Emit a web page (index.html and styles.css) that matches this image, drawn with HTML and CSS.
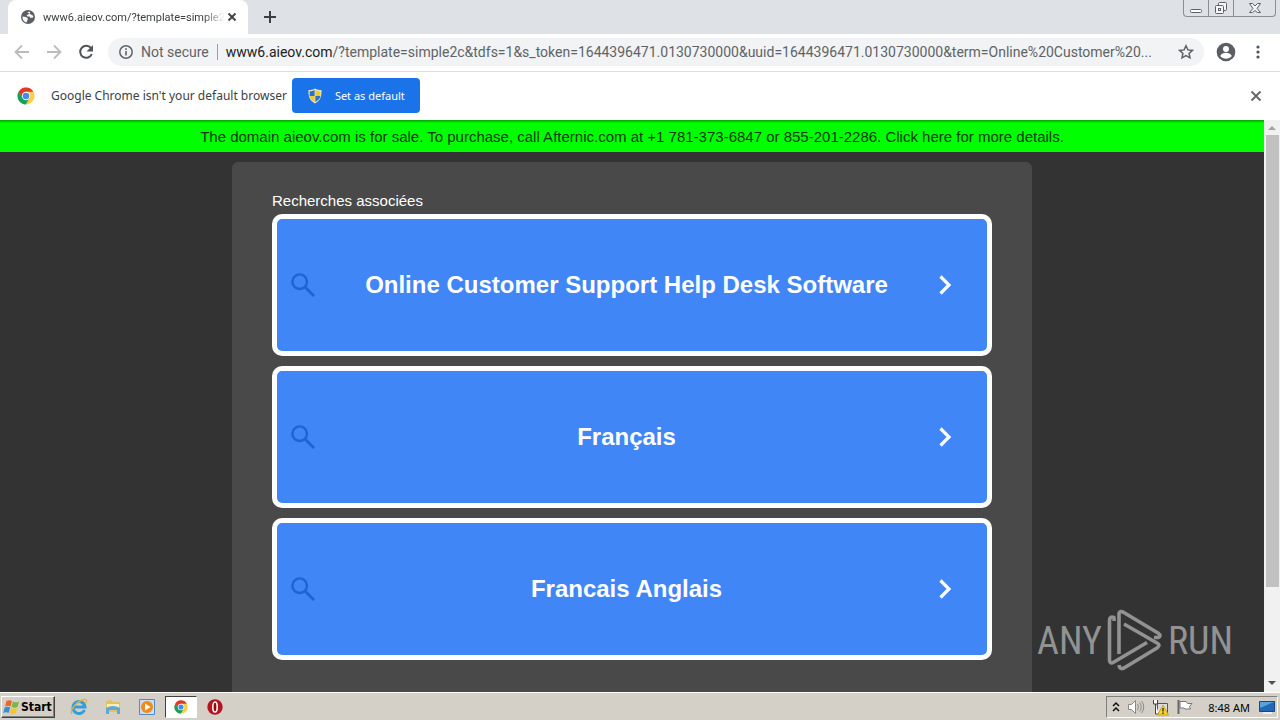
FILE: index.html
```html
<!DOCTYPE html>
<html lang="en">
<head>
<meta charset="utf-8">
<title>www6.aieov.com</title>
<link rel="stylesheet" href="styles.css">
</head>
<body>
<header class="tabstrip">
  <div class="tab">
    <svg class="tab-icon" width="14" height="14" viewBox="0 0 14 14"><circle cx="7" cy="7" r="7" fill="#5b5e63"/><path d="M1.500 6.500L5 7l2 1.500-.5 1.500-1 2.500C3 12 1.200 9.500 1.500 6.500zM6 2l3-.2V3L7 4.500 5.500 5.500l1 1h2l1 1.500 2.500-.5.500-1.500" fill="#f5f6f7"/></svg>
    <span class="tab-title">www6.aieov.com/?template=simple2</span>
    <button class="icon-btn" aria-label="Close tab"><svg width="10" height="10" viewBox="0 0 10 10"><path d="M1.500 1.500l7 7m0-7l-7 7" stroke="#3c4043" stroke-width="1.800"/></svg></button>
  </div>
  <button class="icon-btn new-tab" aria-label="New tab"><svg width="12" height="12" viewBox="0 0 12 12"><path d="M6 0v12M0 6h12" stroke="#3c4043" stroke-width="2"/></svg></button>
  <div class="window-controls">
    <button aria-label="Minimize"><svg width="14" height="14" viewBox="0 0 14 14"><rect x="1.500" y="8.500" width="11" height="3" rx="1" fill="#fff" stroke="#5d6068"/></svg></button>
    <button aria-label="Restore"><svg width="14" height="14" viewBox="0 0 14 14"><g fill="#f5f6f8" stroke="#5d6068"><rect x="4.500" y="1.500" width="8" height="8" rx="1"/><rect x="1.500" y="4.500" width="8" height="8" rx="1"/><rect x="4.500" y="7.500" width="2" height="2"/></g></svg></button>
    <button class="wide" aria-label="Close"><svg width="14" height="14" viewBox="0 0 14 14"><path d="M1.500 2.500h3L7 5l2.500-2.500h3L9 7.500l3.500 4h-3L7 9.500l-2.500 2h-3L5 7.500z" fill="#f5f6f8" stroke="#5d6068"/></svg></button>
  </div>
</header>

<nav class="toolbar">
  <button class="icon-btn nav-btn" aria-label="Back"><svg width="16" height="16" viewBox="0 0 16 16"><path d="M15 8H2M8 1.500L1.500 8 8 14.500" fill="none" stroke="#babcbe" stroke-width="1.800"/></svg></button>
  <button class="icon-btn nav-btn" aria-label="Forward"><svg width="16" height="16" viewBox="0 0 16 16"><path d="M1 8h13M8 1.500L14.500 8 8 14.500" fill="none" stroke="#babcbe" stroke-width="1.800"/></svg></button>
  <button class="icon-btn nav-btn" aria-label="Reload"><svg width="16" height="16" viewBox="0 0 16 16"><path d="M13 4.200A6 6 0 1 0 13.800 10" fill="none" stroke="#505357" stroke-width="2"/><path d="M15 1v6.500H8.500z" fill="#505357"/></svg></button>
  <div class="omnibox">
    <svg width="14" height="14" viewBox="0 0 14 14"><circle cx="7" cy="7" r="6.200" fill="none" stroke="#5f6368" stroke-width="1.500"/><path d="M7 6v4.500M7 3.300v1.600" stroke="#5f6368" stroke-width="1.600"/></svg>
    <span class="security">Not secure</span>
    <label class="host" for="address">www6.aieov.com</label>
    <input class="path" id="address" type="text" value="/?template=simple2c&amp;tdfs=1&amp;s_token=1644396471.0130730000&amp;uuid=1644396471.0130730000&amp;term=Online%20Customer%20...">
    <button class="icon-btn" aria-label="Bookmark this page"><svg width="16" height="16" viewBox="0 0 16 16"><path d="M8 1.800l1.900 4.100 4.500.5-3.300 3 .9 4.400L8 11.600l-4 2.200.9-4.400-3.300-3 4.500-.5z" fill="none" stroke="#5f6368" stroke-width="1.500"/></svg></button>
  </div>
  <button class="icon-btn" aria-label="Profile"><svg width="20" height="20" viewBox="0 0 20 20"><circle cx="10" cy="10" r="9.300" fill="#5a5d62"/><circle cx="10" cy="7" r="3" fill="#fff"/><path d="M4.200 14c1-2.700 3.500-3.300 5.800-3.300s4.800.6 5.800 3.300c-3 3.700-8.600 3.700-11.600 0z" fill="#fff"/></svg></button>
  <button class="icon-btn" aria-label="Menu"><svg width="4" height="14" viewBox="0 0 4 14"><g fill="#505357"><circle cx="2" cy="2" r="1.600"/><circle cx="2" cy="7" r="1.600"/><circle cx="2" cy="12" r="1.600"/></g></svg></button>
</nav>

<section class="infobar">
  <svg width="18" height="18" viewBox="0 0 18 18"><circle cx="9" cy="9" r="8.500" fill="#ffcd40"/><path d="M1.600 4.800A8.500 8.500 0 0 1 16.400 4.800H9L5.400 11z" fill="#e0392c"/><path d="M1.600 4.800A8.500 8.500 0 0 0 8.800 17.500l3.700-6.400H9L5.400 11z" fill="#12a15f"/><circle cx="9" cy="9" r="4.200" fill="#fff"/><circle cx="9" cy="9" r="3.300" fill="#4587f3"/></svg>
  <span class="infobar-text">Google Chrome isn't your default browser</span>
  <button class="default-btn"><svg width="16" height="16" viewBox="0 0 16 16"><path d="M8 .5C6 1.800 4 2 1.500 2c-.3 6 1 10.500 6.500 13.500C13.500 12.500 14.800 8 14.500 2 12 2 10 1.800 8 .5z" fill="#e8e3c0"/><path d="M7.600 2C6 3 4.500 3.200 2.700 3.300V8h4.900zM8.400 8v6C11.500 12 13 10.500 13.300 8z" fill="#2c6fc4"/><path d="M8.400 2c1.500 1 3 1.200 4.900 1.300V8H8.400zM2.700 8c.5 2.800 2 4.500 4.900 6V8z" fill="#f3c92a"/></svg>Set as default</button>
  <button class="icon-btn dismiss" aria-label="Dismiss"><svg width="12" height="12" viewBox="0 0 12 12"><path d="M1.500 1.500l9 9m0-9l-9 9" stroke="#5f6368" stroke-width="1.800"/></svg></button>
</section>

<div class="viewport">
  <main class="page">
    <a class="banner" href="#">The domain aieov.com is for sale. To purchase, call Afternic.com at +1 781-373-6847 or 855-201-2286. Click here for more details.</a>
    <div class="panel">
      <h1 class="heading">Recherches associées</h1>
      <a class="card" href="#"><svg width="24" height="24" viewBox="0 0 24 24"><circle cx="8.700" cy="8.700" r="7.300" fill="none" stroke="#1c64d8" stroke-width="2.400"/><path d="M14 14l9 9" stroke="#1c64d8" stroke-width="3"/></svg><span class="card-title">Online Customer Support Help Desk Software</span><svg width="14" height="20" viewBox="0 0 14 20"><path d="M2.500 1.500L11 10l-8.500 8.500" fill="none" stroke="#fff" stroke-width="3.200"/></svg></a>
      <a class="card" href="#"><svg width="24" height="24" viewBox="0 0 24 24"><circle cx="8.700" cy="8.700" r="7.300" fill="none" stroke="#1c64d8" stroke-width="2.400"/><path d="M14 14l9 9" stroke="#1c64d8" stroke-width="3"/></svg><span class="card-title">Français</span><svg width="14" height="20" viewBox="0 0 14 20"><path d="M2.500 1.500L11 10l-8.500 8.500" fill="none" stroke="#fff" stroke-width="3.200"/></svg></a>
      <a class="card" href="#"><svg width="24" height="24" viewBox="0 0 24 24"><circle cx="8.700" cy="8.700" r="7.300" fill="none" stroke="#1c64d8" stroke-width="2.400"/><path d="M14 14l9 9" stroke="#1c64d8" stroke-width="3"/></svg><span class="card-title">Francais Anglais</span><svg width="14" height="20" viewBox="0 0 14 20"><path d="M2.500 1.500L11 10l-8.500 8.500" fill="none" stroke="#fff" stroke-width="3.200"/></svg></a>
    </div>
  </main>
  <div class="scrollbar">
    <svg width="16" height="15" viewBox="0 0 16 15"><path d="M4 10l4-4 4 4z" fill="#a3a3a3"/></svg>
    <div class="thumb"></div>
    <svg width="16" height="16" viewBox="0 0 16 16"><path d="M4 5l4 4 4-4z" fill="#505050"/></svg>
  </div>
  <div class="watermark">
    <span>ANY</span>
    <svg width="56" height="64" viewBox="0 0 56 64"><g fill="none" stroke="#929292" stroke-width="3.600" stroke-linejoin="round"><path d="M7 12V8.500Q3 7 2.500 11V51.500Q3 55.500 7 53L40 33.500"/><path d="M12 45V4.500Q12.500 1.500 16 3L51 24Q55 27 51 28.500H47"/><path d="M17 15L50 34Q54 36 50 39L17 59Q12.500 61 12 56"/></g></svg>
    <span>RUN</span>
  </div>
</div>

<footer class="taskbar">
  <button class="start"><svg width="18" height="16" viewBox="0 0 18 16"><path d="M3.500 2Q6 .5 9 2L7.500 7.500Q5 6 2 7.500z" fill="#e9672b"/><path d="M10 2.500Q13 4 16 2.500L14.500 8Q11.500 9.500 8.500 8z" fill="#79b943"/><path d="M1.700 8.500Q5 7 7.200 8.500L5.700 14Q3 12.500.2 14z" fill="#3d8bd4"/><path d="M8.200 9Q11 10.500 14.200 9L12.700 14.500Q10 16 6.700 14.500z" fill="#f5c52c"/></svg>Start</button>
  <div class="launchers">
    <button class="launcher" aria-label="Internet Explorer"><svg width="18" height="18" viewBox="0 0 18 18"><path d="M14.500 12A6 6 0 1 1 15 9H4" fill="none" stroke="#329fdb" stroke-width="3"/><path d="M2 16C-1 13 7 3 14 1.500c3-.5 3 2 1.500 4" fill="none" stroke="#ddb342" stroke-width="1.300"/></svg></button>
    <button class="launcher" aria-label="Explorer"><svg width="18" height="18" viewBox="0 0 18 18"><path d="M2 3l5-1 1 1.500 8 .5v10H2z" fill="#e3c15c"/><path d="M3 6h12v4H3z" fill="#fbefb5"/><path d="M2 10q7-4 14 0v6h-3v-4H5v4H2z" fill="#5aaad8"/></svg></button>
    <button class="launcher" aria-label="Media Player"><svg width="18" height="18" viewBox="0 0 18 18"><path d="M1.500 1.500h15v15h-15z" fill="#c9def1" stroke="#4f8cc7"/><circle cx="9" cy="9" r="6" fill="#f18a19"/><path d="M7 5.500l5.500 3.500L7 12.500z" fill="#fff"/></svg></button>
    <button class="launcher active" aria-label="Chrome"><svg width="14" height="14" viewBox="0 0 18 18"><circle cx="9" cy="9" r="8.500" fill="#ffcd40"/><path d="M1.600 4.800A8.500 8.500 0 0 1 16.400 4.800H9L5.400 11z" fill="#e0392c"/><path d="M1.600 4.800A8.500 8.500 0 0 0 8.800 17.500l3.700-6.400H9L5.400 11z" fill="#12a15f"/><circle cx="9" cy="9" r="4.200" fill="#fff"/><circle cx="9" cy="9" r="3.300" fill="#4587f3"/></svg></button>
    <button class="launcher" aria-label="Opera"><svg width="16" height="16" viewBox="0 0 16 16"><circle cx="8" cy="8" r="7.700" fill="#b5141c"/><ellipse cx="8" cy="8" rx="2.200" ry="5" fill="#8c0b12" stroke="#fff" stroke-width="1.600"/></svg></button>
  </div>
  <div class="tray">
    <svg width="8" height="12" viewBox="0 0 8 12"><path d="M1 5l3-3 3 3M1 10l3-3 3 3" fill="none" stroke="#111" stroke-width="1.500"/></svg>
    <svg width="18" height="16" viewBox="0 0 18 16"><path d="M1.500 5.500h3l4-4v13l-4-4h-3z" fill="#fff" stroke="#888"/><path d="M10.500 5q2 3 0 6M12.500 3.500q3.500 4.500 0 9M14.500 2q4.500 6 0 12" fill="none" stroke="#8a8a8a"/></svg>
    <svg width="17" height="17" viewBox="0 0 17 17"><path d="M5.500 4.500h10v9h-10z" fill="#ddd" stroke="#555"/><path d="M1.500 1v4h4V1M3.500 5v10H7" fill="#fff" stroke="#444"/><path d="M11 6l5.500 10h-11z" fill="#f7d12e" stroke="#b98f00" stroke-width=".7"/><path d="M11 9v3.500m0 1v1.500" stroke="#222" stroke-width="1.300"/></svg>
    <svg width="18" height="16" viewBox="0 0 18 16"><path d="M2.500 1v14" stroke="#666" stroke-width="2"/><path d="M4 2.500h6l1.500 2H16l-2.500 3 1 2.500H9L8 9H4z" fill="#fff" stroke="#777"/></svg>
    <time class="clock">8:48 AM</time>
    <svg width="16" height="14" viewBox="0 0 16 14"><path d="M.5 1.500h15v10H.5z" fill="#2468b5" stroke="#174684"/><path d="M1 2h14L1 8z" fill="#5ba1df"/><path d="M4 13h9" stroke="#e9eef4" stroke-width="2"/></svg>
  </div>
</footer>
</body>
</html>
```
FILE: styles.css
```css
* { box-sizing: border-box; }
html, body { height: 100%; }
body {
  margin: 0;
  display: flex;
  flex-direction: column;
  overflow: hidden;
  font-family: "Noto Sans", "Open Sans", sans-serif;
  font-size: 12px;
  color: #3c4043;
  background: #fff;
}
svg { display: block; flex: none; }
button { font: inherit; color: inherit; border: 0; padding: 0; background: none; }
a { color: inherit; text-decoration: none; }
.icon-btn { display: flex; align-items: center; justify-content: center; flex: none; }

.tabstrip { display: flex; align-items: flex-start; height: 34px; flex: none; padding-left: 8px; background: #dee1e6; }
.tab { display: flex; align-items: center; width: 240px; height: 34px; padding: 0 11px 0 13px; border-radius: 8px 8px 0 0; background: #fff; }
.tab-title {
  flex: 1;
  margin: 0 2px 0 8px;
  white-space: nowrap;
  font-family: Roboto, sans-serif;
  font-size: 11px;
  -webkit-mask-image: linear-gradient(to right, #000 88%, transparent);
  mask-image: linear-gradient(to right, #000 88%, transparent);
}
.new-tab { width: 44px; height: 34px; }
.window-controls { display: flex; margin: 0 4px 0 auto; border: 1px solid #8b8e97; border-top: 0; border-radius: 0 0 4px 4px; }
.window-controls button { display: flex; justify-content: center; align-items: center; width: 25px; height: 16px; border-right: 1px solid #8b8e97; }
.window-controls .wide { width: 41px; border-right: 0; }

.toolbar { display: flex; align-items: center; height: 38px; flex: none; padding: 0 20px 2px 6px; border-bottom: 1px solid #dadce0; background: #fff; }
.nav-btn { width: 32px; height: 32px; }
.omnibox { display: flex; align-items: center; flex: 1; height: 28px; margin: 0 12px 0 6px; padding: 0 10px 0 11px; border-radius: 14px; background: #f1f3f4; font-family: Roboto, sans-serif; font-size: 14px; color: #5f6368; }
.security { margin: 0 8px; padding-right: 8px; border-right: 1px solid #9aa0a6; line-height: 16px; white-space: nowrap; }
.host { color: #202124; }
.path { flex: 1; min-width: 0; padding: 0; border: 0; background: none; font: inherit; color: inherit; text-overflow: ellipsis; outline: 0; }
.omnibox .icon-btn { margin-left: 12px; }
.omnibox + .icon-btn { margin-right: 20px; }

.infobar { display: flex; align-items: center; height: 48px; flex: none; padding: 0 18px 1px 17px; background: #fff; }
.infobar-text { margin: 0 5px 0 16px; }
.default-btn { display: flex; align-items: center; gap: 12px; height: 35px; padding: 0 15px; border-radius: 4px; background: #1a73e8; color: #fff; font-size: 11px; }
.dismiss { margin-left: auto; }

.viewport { position: relative; display: flex; flex: 1; min-height: 0; background: #333; }
.page { flex: 1; min-width: 0; overflow: hidden; font-family: "Liberation Sans", Arial, sans-serif; font-size: 15px; }
.banner { display: block; height: 32px; line-height: 34px; text-align: center; white-space: nowrap; background: linear-gradient(#00a000, #0f0 3px); color: #033a03; }
.panel { display: flex; flex-direction: column; gap: 10px; max-width: 800px; margin: 10px auto 0; padding: 30px 40px 40px; border-radius: 6px; background: #494949; }
.heading { margin: 0 0 -6px; font-size: 15px; line-height: 18px; font-weight: 400; color: #fff; }
.card { display: flex; align-items: center; height: 142px; padding: 0 35px 0 14px; border: 5px solid #fff; border-radius: 10px; background: #4086f6; color: #fff; }
.card-title { flex: 1; text-align: center; font-size: 24px; font-weight: 700; }

.scrollbar { display: flex; flex-direction: column; width: 16px; flex: none; background: #f1f1f1; }
.thumb { width: 13px; height: 79%; margin: 0 1px auto 2px; background: #c1c1c1; }

.watermark { position: absolute; right: 47px; bottom: 19px; display: flex; align-items: center; gap: 5px; font-family: "Liberation Sans Narrow", "Roboto Condensed", "Liberation Sans", sans-serif; font-size: 38px; line-height: 64px; color: #929292; }

.taskbar { display: flex; align-items: center; height: 28px; flex: none; padding: 1px 2px 0 1px; border-top: 1px solid #fff; background: #d4d0c8; color: #000; }
.start { display: flex; align-items: center; height: 22px; padding: 0 2px 0 1px; border: 1px solid; border-color: #fff #404040 #404040 #fff; box-shadow: inset -1px -1px #808080; font-family: "DejaVu Sans Condensed", "DejaVu Sans", sans-serif; font-size: 12px; font-weight: 700; }
.launchers { display: flex; margin-left: 8px; gap: 2px; }
.launcher { display: flex; align-items: center; justify-content: center; width: 32px; height: 22px; }
.launcher.active { border: 1px solid; border-color: #404040 #fff #fff #404040; background: #fff; }
.tray { display: flex; align-items: center; gap: 7px; height: 22px; margin-left: auto; padding: 0 2px 0 5px; border: 1px solid; border-color: #808080 #fff #fff #808080; }
.clock { margin: 0 2px 0 7px; font-size: 11px; white-space: nowrap; }
```
